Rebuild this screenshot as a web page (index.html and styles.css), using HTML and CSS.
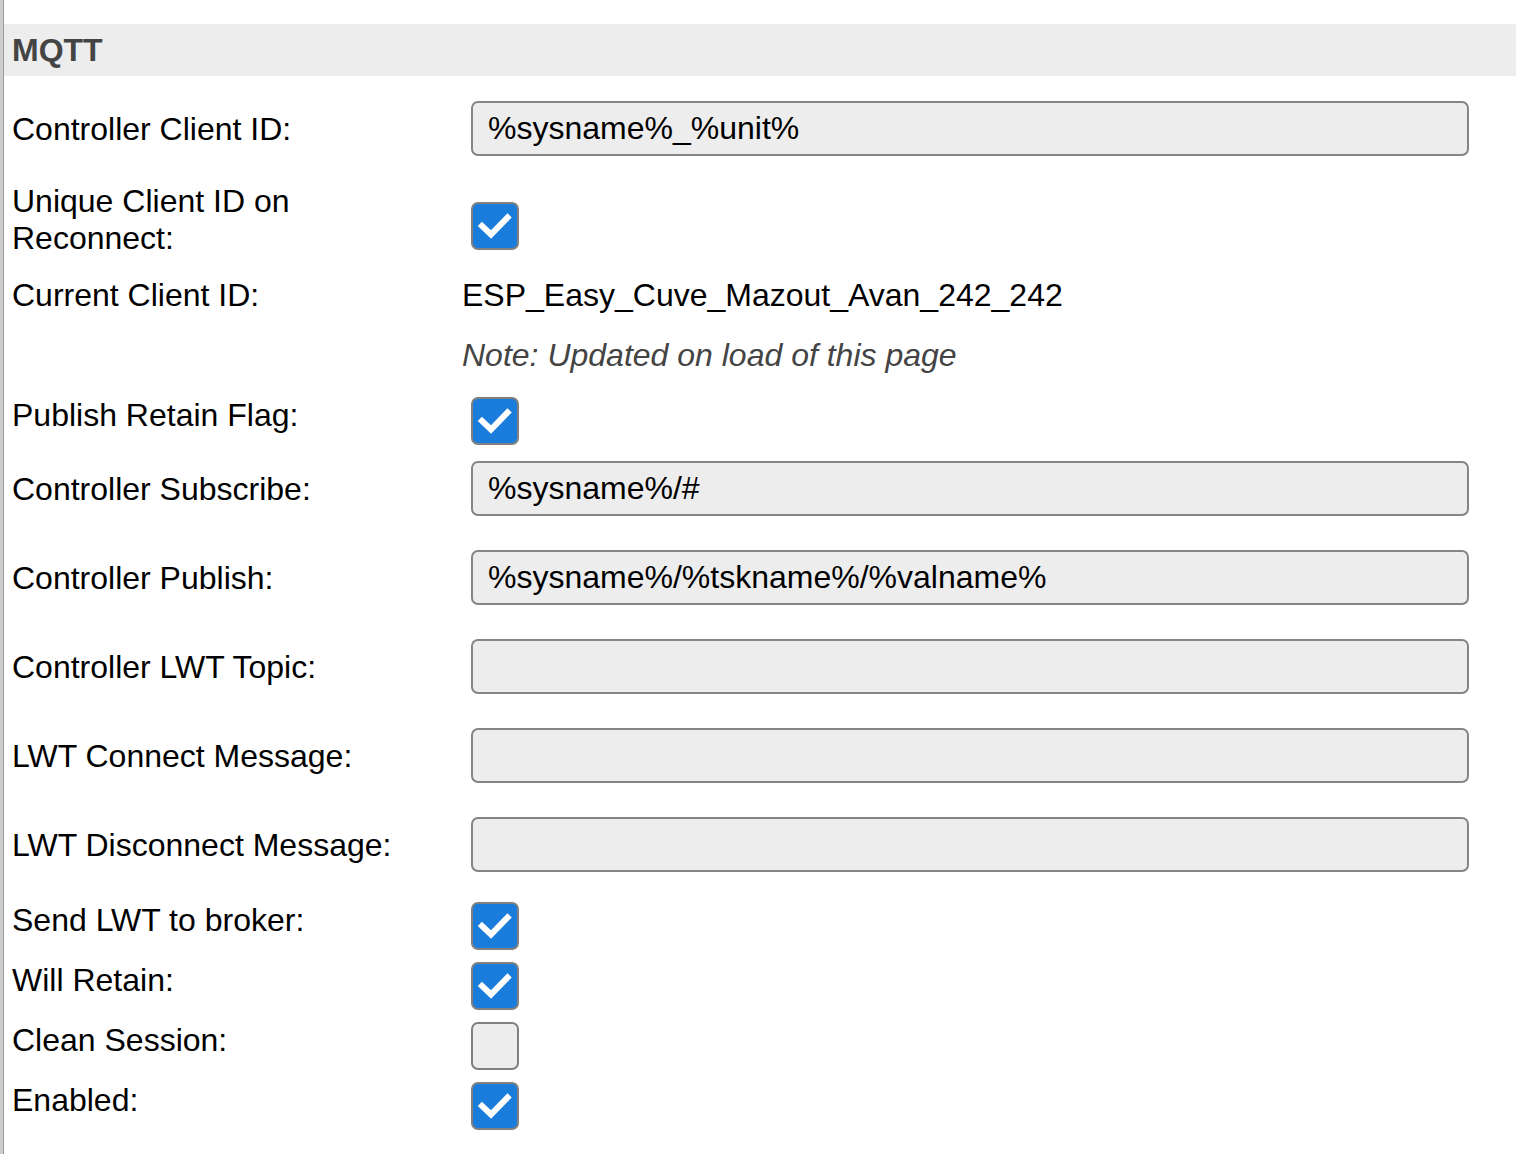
FILE: index.html
```html
<!DOCTYPE html>
<html>
<head>
<meta charset="utf-8">
<link rel="stylesheet" href="styles.css">
</head>
<body>
<div class="frame">
  <div class="section-head">MQTT</div>
  <div class="form">
    <div class="row tall">
      <div class="label">Controller Client ID:</div>
      <div class="value"><div class="input">%sysname%_%unit%</div></div>
    </div>
    <div class="row two">
      <div class="label">Unique Client ID on Reconnect:</div>
      <div class="value"><span class="cb on"><svg viewBox="0 0 44 44"><path d="M9 22 L18 30.5 L34.5 13.5"/></svg></span></div>
    </div>
    <div class="row">
      <div class="label">Current Client ID:</div>
      <div class="value text">ESP_Easy_Cuve_Mazout_Avan_242_242</div>
    </div>
    <div class="row">
      <div class="label"></div>
      <div class="value text note">Note: Updated on load of this page</div>
    </div>
    <div class="row">
      <div class="label">Publish Retain Flag:</div>
      <div class="value"><span class="cb on"><svg viewBox="0 0 44 44"><path d="M9 22 L18 30.5 L34.5 13.5"/></svg></span></div>
    </div>
    <div class="row tall">
      <div class="label">Controller Subscribe:</div>
      <div class="value"><div class="input">%sysname%/#</div></div>
    </div>
    <div class="row tall">
      <div class="label">Controller Publish:</div>
      <div class="value"><div class="input">%sysname%/%tskname%/%valname%</div></div>
    </div>
    <div class="row tall">
      <div class="label">Controller LWT Topic:</div>
      <div class="value"><div class="input"></div></div>
    </div>
    <div class="row tall">
      <div class="label">LWT Connect Message:</div>
      <div class="value"><div class="input"></div></div>
    </div>
    <div class="row tall">
      <div class="label">LWT Disconnect Message:</div>
      <div class="value"><div class="input"></div></div>
    </div>
    <div class="row">
      <div class="label">Send LWT to broker:</div>
      <div class="value"><span class="cb on"><svg viewBox="0 0 44 44"><path d="M9 22 L18 30.5 L34.5 13.5"/></svg></span></div>
    </div>
    <div class="row">
      <div class="label">Will Retain:</div>
      <div class="value"><span class="cb on"><svg viewBox="0 0 44 44"><path d="M9 22 L18 30.5 L34.5 13.5"/></svg></span></div>
    </div>
    <div class="row">
      <div class="label">Clean Session:</div>
      <div class="value"><span class="cb"></span></div>
    </div>
    <div class="row">
      <div class="label">Enabled:</div>
      <div class="value"><span class="cb on"><svg viewBox="0 0 44 44"><path d="M9 22 L18 30.5 L34.5 13.5"/></svg></span></div>
    </div>
  </div>
</div>
</body>
</html>
```
FILE: styles.css
```css
html, body {
  margin: 0;
  padding: 0;
  background: #fff;
}
body {
  font-family: "Liberation Sans", Arial, Helvetica, sans-serif;
  font-size: 32px;
  color: #000;
}
.frame {
  min-height: 1154px;
  box-sizing: border-box;
  border-left: 3px solid #cdcdcd;
  box-shadow: inset 1px 0 0 #9c9c9c;
  padding-top: 24px;
}
.section-head {
  height: 52px;
  background: #ededed;
  color: #444;
  font-weight: bold;
  font-size: 32px;
  line-height: 52px;
  padding-left: 8px;
  margin-left: 1px;
  margin-bottom: 9px;
}
.form {
  padding-left: 9px;
}
.row {
  display: flex;
  align-items: center;
  min-height: 60px;
}
.row.tall {
  min-height: 89px;
}
.row.two {
  min-height: 91px;
}
.label {
  width: 440px;
  padding-right: 10px;
  line-height: 37px;
  flex: none;
}
.value {
  flex: 1;
  display: flex;
  align-items: center;
}
.value.text {
  line-height: 37px;
}
.note {
  font-style: italic;
  color: #444;
}
.input {
  box-sizing: border-box;
  margin-left: 9px;
  margin-bottom: 2px;
  width: 998px;
  height: 55px;
  border: 2px solid #858585;
  border-radius: 7px;
  background: #ededed;
  padding: 0 15px;
  line-height: 51px;
  font-size: 32px;
  white-space: nowrap;
}
.cb {
  box-sizing: border-box;
  display: block;
  width: 48px;
  height: 48px;
  margin-left: 9px;
  margin-top: 12px;
  border: 2px solid #808080;
  border-radius: 7px;
  background: #ededed;
}
.cb.on {
  background: #1a7cdb;
}
.cb svg {
  display: block;
  width: 44px;
  height: 44px;
}
.cb svg path {
  fill: none;
  stroke: #fff;
  stroke-width: 6;
  stroke-linecap: square;
  stroke-linejoin: miter;
}
```
